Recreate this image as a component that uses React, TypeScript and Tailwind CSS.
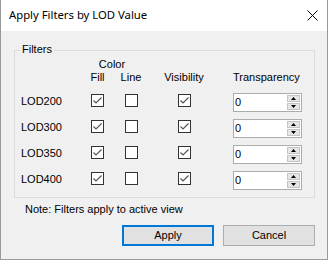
import React from "react";

const rows = ["LOD200", "LOD300", "LOD350", "LOD400"];

const CheckBox: React.FC<{ checked?: boolean }> = ({ checked }) => (
  <div className="w-[13px] h-[13px] border border-[#333333] bg-white flex items-center justify-center">
    {checked && (
      <svg width="11" height="11" viewBox="0 0 11 11">
        <polyline points="1.5,5.5 4,8 9.5,2.5" fill="none" stroke="#555555" strokeWidth="1.2" />
      </svg>
    )}
  </div>
);

const Spin: React.FC = () => (
  <div className="w-[69px] h-[19px] border border-[#acacac] bg-white flex">
    <div className="flex-1 pl-[1px] leading-[17px] text-black">0</div>
    <div className="w-[15px] flex flex-col p-[1px] gap-[1px]">
      <div className="flex-1 bg-[#e6e6e6] border border-[#c4c4c4] flex items-center justify-center">
        <svg width="5" height="3" viewBox="0 0 5 3">
          <polygon points="2.5,0 5,3 0,3" fill="#000" />
        </svg>
      </div>
      <div className="flex-1 bg-[#e6e6e6] border border-[#c4c4c4] flex items-center justify-center">
        <svg width="5" height="3" viewBox="0 0 5 3">
          <polygon points="0,0 5,0 2.5,3" fill="#000" />
        </svg>
      </div>
    </div>
  </div>
);

const App: React.FC = () => {
  return (
    <div className="w-[328px] h-[260px] flex flex-col border-x border-b border-[#9a9a9a] bg-[#f0f0f0] text-[11px] text-black font-['Liberation_Sans',Arial,sans-serif]">
      <header className="h-[31px] bg-white flex items-center pl-[8px] pr-[9px]">
        <span className="font-['Noto_Sans',sans-serif] text-[11.3px] text-black">Apply Filters by LOD Value</span>
        <svg className="ml-auto" width="11" height="11" viewBox="0 0 11 11">
          <path d="M0.5 0.5 L10.5 10.5 M10.5 0.5 L0.5 10.5" stroke="#000" strokeWidth="1" />
        </svg>
      </header>

      <div className="flex-1 flex flex-col pl-[13px] pr-[12px]">
        <div className="relative mt-[19px] h-[148px] border border-[#dcdcdc]">
          <span className="absolute -top-[8px] left-[5px] px-[2px] bg-[#f0f0f0] leading-[13px]">Filters</span>

          <div className="grid grid-cols-[66px_33px_34px_72px_88px] pt-[6px] leading-[13px]">
            <div />
            <div className="col-span-2 text-center pr-[5px] leading-[14px]">Color</div>
            <div />
            <div />

            <div />
            <div className="text-center">Fill</div>
            <div className="text-center">Line</div>
            <div className="text-center">Visibility</div>
            <div className="pl-[13px]">Transparency</div>
          </div>

          <div className="mt-[9px] flex flex-col">
            {rows.map((r) => (
              <div key={r} className="h-[26px] grid grid-cols-[66px_33px_34px_72px_88px] items-start">
                <div className="pl-[6px] mt-[2px] leading-[13px]">{r}</div>
                <div className="flex justify-center mt-[1px]"><CheckBox checked /></div>
                <div className="flex justify-center mt-[1px]"><CheckBox /></div>
                <div className="flex justify-center mt-[1px]"><CheckBox checked /></div>
                <div className="pl-[13px]"><Spin /></div>
              </div>
            ))}
          </div>
        </div>

        <div className="mt-[5px] ml-[11px] leading-[13px]">Note: Filters apply to active view</div>

        <div className="mt-[9px] flex justify-end gap-[9px]">
          <button className="w-[92px] h-[21px] border-2 border-[#0078d7] bg-[#e1e1e1] text-black leading-none">Apply</button>
          <button className="w-[92px] h-[21px] border border-[#adadad] bg-[#e1e1e1] text-black leading-none">Cancel</button>
        </div>
      </div>
    </div>
  );
};

export default App;
